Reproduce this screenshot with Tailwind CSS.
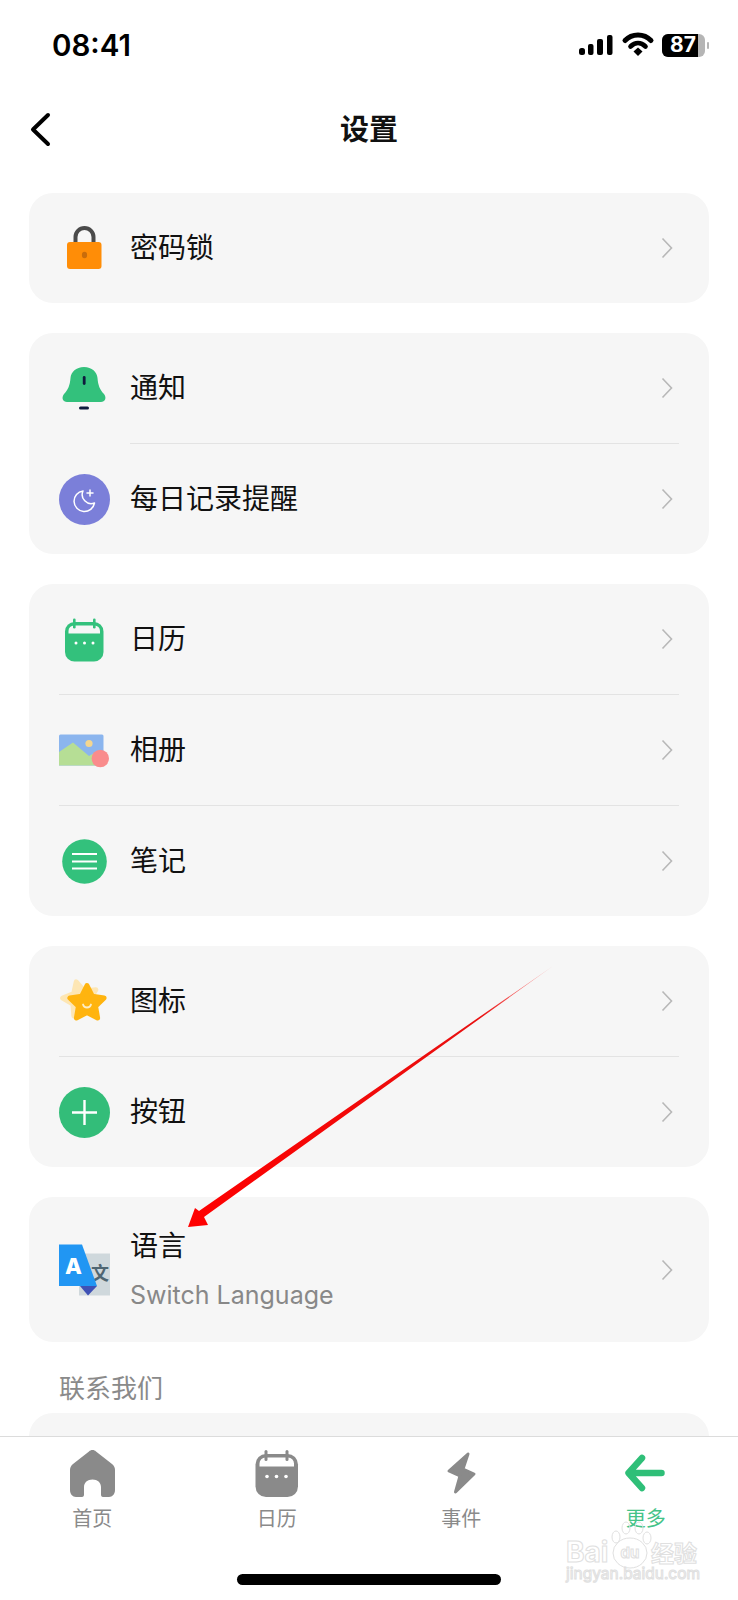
<!doctype html>
<html lang="zh">
<head>
<meta charset="utf-8">
<script src="https://cdn.jsdelivr.net/npm/@tailwindcss/browser@4"></script>
</head>
<body>
<div class="relative flex h-[1600px] w-[738px] flex-col overflow-hidden bg-white font-['Inter','Noto_Sans_CJK_SC',sans-serif] text-[#111]">

  <!-- status bar -->
  <div class="relative h-[90px] shrink-0">
    <span class="absolute left-[52px] top-[26px] text-[29.5px] leading-[38px] font-semibold text-black">08:41</span>
    <svg class="absolute left-[575px] top-[28px]" width="140" height="34" viewBox="0 0 140 34">
      <rect x="4" y="20" width="6" height="7" rx="2.500" fill="#000"/>
      <rect x="13" y="16" width="5.500" height="11" rx="2" fill="#000"/>
      <rect x="22" y="11" width="6" height="16" rx="2" fill="#000"/>
      <rect x="32" y="7" width="5.500" height="20" rx="2" fill="#000"/>
      <path d="M50 12.500C57 5 69 5 76 12.500" fill="none" stroke="#000" stroke-width="5" stroke-linecap="round"/>
      <path d="M55.500 18.500C60 14 66 14 70.500 18.500" fill="none" stroke="#000" stroke-width="4.600" stroke-linecap="round"/>
      <path d="M58.500 23.400L63 19.500L67.500 23.400L63 28Z" fill="#000"/>
      <rect x="87" y="6" width="43" height="23" rx="6" fill="#b5b5b5"/>
      <path d="M93 6H123V29H93A6 6 0 0 1 87 23V12A6 6 0 0 1 93 6Z" fill="#000"/>
      <rect x="132" y="14" width="2" height="7" rx="1" fill="#b5b5b5"/>
    </svg>
    <span class="absolute left-[670px] top-[32px] text-[21px] leading-[26px] font-bold text-white">87</span>
  </div>

  <!-- nav -->
  <div class="relative flex h-[80px] shrink-0 items-center justify-center">
    <svg class="absolute left-[26px] top-[18px]" width="30" height="42" viewBox="0 0 30 42">
      <path d="M22 7L7 21.500L22 36" fill="none" stroke="#000" stroke-width="4" stroke-linecap="round" stroke-linejoin="round"/>
    </svg>
    <span class="text-[29px] leading-[40px] font-bold">设置</span>
  </div>

  <!-- settings list -->
  <main class="flex min-h-0 flex-1 flex-col gap-[30px] overflow-hidden px-[29px] pt-[23px]">

    <section class="shrink-0 rounded-[24px] bg-[#f6f6f6] pl-[30px] pr-[30px]">
      <div class="flex h-[110px] items-center">
        <svg class="mr-[20px] shrink-0" width="51" height="51" viewBox="0 0 51 51">
          <path d="M16.500 20V14A8.800 8.800 0 0 1 34.500 14V20" fill="none" stroke="#4a4a4a" stroke-width="4"/>
          <rect x="8" y="19" width="34.500" height="27" rx="3" fill="#ff8d07"/>
          <ellipse cx="25.500" cy="32" rx="2.600" ry="3.200" fill="#c96c0b"/>
        </svg>
        <span class="flex-1 text-[28px] leading-[40px]">密码锁</span>
        <svg class="mr-[6px]" width="12" height="22" viewBox="0 0 12 22"><path d="M1.500 1.500L10.500 11L1.500 20.500" fill="none" stroke="#b8b8b8" stroke-width="1.600"/></svg>
      </div>
    </section>

    <section class="shrink-0 rounded-[24px] bg-[#f6f6f6] pl-[30px] pr-[30px]">
      <div class="flex h-[110px] items-center">
        <svg class="mr-[20px] shrink-0" width="51" height="51" viewBox="0 0 51 51">
          <path d="M25 4C33 4 38 9 38.500 15C39 22 41 27 45 31C48 35 46 39 42 39H8C4 39 2 35 5 31C9 27 11 22 11.500 15C12 9 17 4 25 4Z" fill="#33c17c"/>
          <rect x="23.800" y="13" width="2.800" height="9" rx="1.400" fill="#0f1b3d"/>
          <rect x="20" y="43.500" width="10" height="3" rx="1.500" fill="#0f1b3d"/>
        </svg>
        <span class="flex-1 text-[28px] leading-[40px]">通知</span>
        <svg class="mr-[6px]" width="12" height="22" viewBox="0 0 12 22"><path d="M1.500 1.500L10.500 11L1.500 20.500" fill="none" stroke="#b8b8b8" stroke-width="1.600"/></svg>
      </div>
      <div class="ml-[71px] h-px bg-[#e3e3e3]"></div>
      <div class="flex h-[110px] items-center">
        <svg class="mr-[20px] shrink-0" width="51" height="51" viewBox="0 0 51 51">
          <circle cx="25.500" cy="25.500" r="25.500" fill="#7b7fd9"/>
          <path d="M24 17A10.300 10.300 0 1 0 35.500 29A9 9 0 0 1 24 17Z" fill="none" stroke="#fff" stroke-width="1.500" stroke-linejoin="round"/>
          <path d="M31 16V22M28 19H34" fill="none" stroke="#fff" stroke-width="1.500" stroke-linecap="round"/>
        </svg>
        <span class="flex-1 text-[28px] leading-[40px]">每日记录提醒</span>
        <svg class="mr-[6px]" width="12" height="22" viewBox="0 0 12 22"><path d="M1.500 1.500L10.500 11L1.500 20.500" fill="none" stroke="#b8b8b8" stroke-width="1.600"/></svg>
      </div>
    </section>

    <section class="shrink-0 rounded-[24px] bg-[#f6f6f6] pl-[30px] pr-[30px]">
      <div class="flex h-[110px] items-center">
        <svg class="mr-[20px] shrink-0" width="51" height="51" viewBox="0 0 51 51">
          <rect x="6" y="8" width="38.500" height="39.500" rx="9.500" fill="#33c17c"/>
          <path d="M9.500 19.500V17A5.500 5.500 0 0 1 15 11.500H35.500A5.500 5.500 0 0 1 41 17V19.500Z" fill="#f6f6f6"/>
          <rect x="14" y="4.500" width="2.600" height="10" rx="1.300" fill="#33c17c"/>
          <rect x="34" y="4.500" width="2.600" height="10" rx="1.300" fill="#33c17c"/>
          <circle cx="17" cy="29" r="1.500" fill="#fff"/><circle cx="25.500" cy="29" r="1.500" fill="#fff"/><circle cx="34" cy="29" r="1.500" fill="#fff"/>
        </svg>
        <span class="flex-1 text-[28px] leading-[40px]">日历</span>
        <svg class="mr-[6px]" width="12" height="22" viewBox="0 0 12 22"><path d="M1.500 1.500L10.500 11L1.500 20.500" fill="none" stroke="#b8b8b8" stroke-width="1.600"/></svg>
      </div>
      <div class="h-px bg-[#e3e3e3]"></div>
      <div class="flex h-[110px] items-center">
        <svg class="mr-[20px] shrink-0" width="51" height="51" viewBox="0 0 51 51">
          <path d="M1.500 9.500H43A1.500 1.500 0 0 1 44.500 11V40.500H0V11A1.500 1.500 0 0 1 1.500 9.500Z" fill="#8bb5ee"/>
          <path d="M0 27L14 17.500L30 31L37 27L44.500 34V40.500H0Z" fill="#b6de95"/>
          <circle cx="30" cy="18.500" r="3.600" fill="#f4d690"/>
          <circle cx="41.300" cy="33.500" r="8.700" fill="#f98c8c"/>
        </svg>
        <span class="flex-1 text-[28px] leading-[40px]">相册</span>
        <svg class="mr-[6px]" width="12" height="22" viewBox="0 0 12 22"><path d="M1.500 1.500L10.500 11L1.500 20.500" fill="none" stroke="#b8b8b8" stroke-width="1.600"/></svg>
      </div>
      <div class="h-px bg-[#e3e3e3]"></div>
      <div class="flex h-[110px] items-center">
        <svg class="mr-[20px] shrink-0" width="51" height="51" viewBox="0 0 51 51">
          <circle cx="25.500" cy="25.500" r="22.300" fill="#33c17c"/>
          <path d="M13 18H38M13 25.500H38M13 32.500H38" fill="none" stroke="#fff" stroke-width="2"/>
        </svg>
        <span class="flex-1 text-[28px] leading-[40px]">笔记</span>
        <svg class="mr-[6px]" width="12" height="22" viewBox="0 0 12 22"><path d="M1.500 1.500L10.500 11L1.500 20.500" fill="none" stroke="#b8b8b8" stroke-width="1.600"/></svg>
      </div>
    </section>

    <section class="shrink-0 rounded-[24px] bg-[#f6f6f6] pl-[30px] pr-[30px]">
      <div class="flex h-[110px] items-center">
        <svg class="mr-[20px] shrink-0" width="51" height="51" viewBox="0 0 51 51">
          <g transform="rotate(-14 21 25) translate(-6 -4)">
            <path d="M28 9.500L33.300 20.200L45.100 21.900L36.600 30.300L38.600 42L28 36.500L17.400 42L19.400 30.300L10.900 21.900L22.700 20.200Z" fill="#fde6b4" stroke="#fde6b4" stroke-width="5" stroke-linejoin="round"/>
          </g>
          <path d="M28 9.500L33.300 20.200L45.100 21.900L36.600 30.300L38.600 42L28 36.500L17.400 42L19.400 30.300L10.900 21.900L22.700 20.200Z" fill="#ffb40f" stroke="#ffb40f" stroke-width="5" stroke-linejoin="round"/>
          <path d="M24 28.500C25 32.500 31 32.500 32 28.500" fill="none" stroke="#fdeec8" stroke-width="1.800" stroke-linecap="round"/>
        </svg>
        <span class="flex-1 text-[28px] leading-[40px]">图标</span>
        <svg class="mr-[6px]" width="12" height="22" viewBox="0 0 12 22"><path d="M1.500 1.500L10.500 11L1.500 20.500" fill="none" stroke="#b8b8b8" stroke-width="1.600"/></svg>
      </div>
      <div class="h-px bg-[#e3e3e3]"></div>
      <div class="flex h-[110px] items-center">
        <svg class="mr-[20px] shrink-0" width="51" height="51" viewBox="0 0 51 51">
          <circle cx="25.500" cy="25.500" r="25.500" fill="#33bd79"/>
          <path d="M13 25.500H38M25.500 13V38" fill="none" stroke="#fff" stroke-width="2.400"/>
        </svg>
        <span class="flex-1 text-[28px] leading-[40px]">按钮</span>
        <svg class="mr-[6px]" width="12" height="22" viewBox="0 0 12 22"><path d="M1.500 1.500L10.500 11L1.500 20.500" fill="none" stroke="#b8b8b8" stroke-width="1.600"/></svg>
      </div>
    </section>

    <div class="shrink-0">
      <section class="rounded-[24px] bg-[#f6f6f6] pl-[30px] pr-[30px]">
        <div class="flex h-[145px] items-center">
          <svg class="mr-[20px] shrink-0" width="51" height="52" viewBox="0 0 51 52">
            <rect x="20" y="9.500" width="31" height="42" fill="#cfd8dc"/>
            <text x="41" y="36" text-anchor="middle" font-family="'Noto Sans CJK SC', sans-serif" font-size="18" font-weight="700" fill="#4f6672">文</text>
            <path d="M21 42H38L29 51.500Z" fill="#3f51b5"/>
            <path d="M0 0.500H23L38 42H0Z" fill="#2196f3"/>
            <text x="14.500" y="30" text-anchor="middle" font-family="Inter, sans-serif" font-size="22" font-weight="800" fill="#fff">A</text>
          </svg>
          <div class="flex flex-1 flex-col gap-[9px] pt-[1px]">
            <span class="text-[28px] leading-[40px]">语言</span>
            <span class="text-[25px] leading-[40px] text-[#888]">Switch Language</span>
          </div>
          <svg class="mr-[6px]" width="12" height="22" viewBox="0 0 12 22"><path d="M1.500 1.500L10.500 11L1.500 20.500" fill="none" stroke="#b8b8b8" stroke-width="1.600"/></svg>
        </div>
      </section>
      <p class="mt-[29px] h-[36px] pl-[30px] text-[26px] leading-[36px] text-[#8a8a8a]">联系我们</p>
      <section class="mt-[6px] h-[110px] rounded-[24px] bg-[#f6f6f6]"></section>
    </div>
  </main>

  <!-- tab bar -->
  <nav class="relative h-[164px] shrink-0 border-t border-[#dcdcdc] bg-white pt-[12px]">
    <div class="grid grid-cols-4">
      <div class="flex flex-col items-center text-[#8a8a8a]">
        <svg width="49" height="49" viewBox="0 0 49 49">
          <path d="M24.500 1C26 1 27 1.500 28 2.500L44 15C46 16.500 47 18.500 47 21V41C47 45 44.500 48 41 48H35C33.500 48 33 47 33 45.500V38C33 33.500 29.500 30.500 24.500 30.500C19.500 30.500 16 33.500 16 38V45.500C16 47 15.500 48 14 48H8C4.500 48 2 45 2 41V21C2 18.500 3 16.500 5 15L21 2.500C22 1.500 23 1 24.500 1Z" fill="#8a8a8a"/>
        </svg>
        <span class="mt-[7px] text-[20px] leading-[28px]">首页</span>
      </div>
      <div class="flex flex-col items-center text-[#8a8a8a]">
        <svg width="49" height="49" viewBox="0 0 49 49">
          <rect x="3.500" y="5" width="42.500" height="43" rx="10.500" fill="#8a8a8a"/>
          <path d="M7.500 17.500V14.500A6 6 0 0 1 13.500 8.500H36A6 6 0 0 1 42 14.500V17.500Z" fill="#fff"/>
          <rect x="12.500" y="1" width="3" height="11" rx="1.500" fill="#8a8a8a"/>
          <rect x="33.500" y="1" width="3" height="11" rx="1.500" fill="#8a8a8a"/>
          <circle cx="15" cy="27.500" r="1.800" fill="#fff"/><circle cx="24.500" cy="27.500" r="1.800" fill="#fff"/><circle cx="34" cy="27.500" r="1.800" fill="#fff"/>
        </svg>
        <span class="mt-[7px] text-[20px] leading-[28px]">日历</span>
      </div>
      <div class="flex flex-col items-center text-[#8a8a8a]">
        <svg width="49" height="49" viewBox="0 0 49 49">
          <path d="M31 5L12 22L23 27L18.500 43L37 25L26 20Z" fill="#8a8a8a" stroke="#8a8a8a" stroke-width="3" stroke-linejoin="round"/>
        </svg>
        <span class="mt-[7px] text-[20px] leading-[28px]">事件</span>
      </div>
      <div class="flex flex-col items-center text-[#45c388]">
        <svg width="49" height="49" viewBox="0 0 49 49">
          <path d="M21 9L7.500 24L21 39M8 24H40.500" fill="none" stroke="#2fbf78" stroke-width="6.500" stroke-linecap="round" stroke-linejoin="round"/>
        </svg>
        <span class="mt-[7px] text-[20px] leading-[28px]">更多</span>
      </div>
    </div>
    <div class="absolute bottom-[15px] left-[237px] h-[11px] w-[264px] rounded-full bg-black"></div>
  </nav>

  <!-- red annotation arrow -->
  <svg class="pointer-events-none absolute left-0 top-0" width="738" height="1600" viewBox="0 0 738 1600">
    <defs>
      <linearGradient id="arrow-fade" gradientUnits="userSpaceOnUse" x1="553" y1="966" x2="188" y2="1227">
        <stop offset="0" stop-color="#ff0000" stop-opacity="0.25"/>
        <stop offset="0.2" stop-color="#e81010"/>
        <stop offset="1" stop-color="#ff0000"/>
      </linearGradient>
    </defs>
    <path d="M553 966L204 1217L208 1225L188 1227L195 1208L199 1211Z" fill="url(#arrow-fade)"/>
  </svg>

  <!-- watermark -->
  <svg class="pointer-events-none absolute left-[560px] top-[1515px]" width="150" height="72" viewBox="0 0 150 72" fill="none" stroke="#e0e0e0" stroke-width="1">
    <text x="6" y="47" font-family="Inter, sans-serif" font-size="28" font-weight="700">Bai</text>
    <ellipse cx="56" cy="22" rx="4" ry="6"/><ellipse cx="66" cy="13" rx="4" ry="6"/><ellipse cx="79" cy="13" rx="4" ry="6"/><ellipse cx="87" cy="23" rx="4" ry="6"/>
    <ellipse cx="70" cy="38" rx="17" ry="15"/>
    <text x="70" y="43" text-anchor="middle" font-family="Inter, sans-serif" font-size="15" font-weight="700">du</text>
    <text x="91" y="47" font-family="'Noto Sans CJK SC', sans-serif" font-size="23" font-weight="700">经验</text>
    <text x="6" y="64" font-family="Inter, sans-serif" font-size="15.500">jingyan.baidu.com</text>
  </svg>
</div>
</body>
</html>
